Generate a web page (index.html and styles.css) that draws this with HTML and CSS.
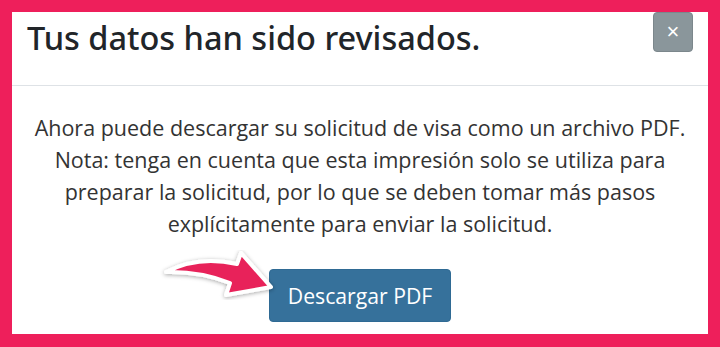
FILE: index.html
```html
<!DOCTYPE html>
<html>
<head>
  <meta charset="UTF-8">
  <title>Datos revisados</title>
  <link rel="stylesheet" href="styles.css">
</head>
<body>
  <div class="modal">
    <div class="modal-header">
      <h1>Tus datos han sido revisados.</h1>
      <button class="close-button" aria-label="Cerrar">&times;</button>
    </div>
    <div class="modal-body">
      <p>Ahora puede descargar su solicitud de visa como un archivo PDF.<br>
      Nota: tenga en cuenta que esta impresión solo se utiliza para<br>
      preparar la solicitud, por lo que se deben tomar más pasos<br>
      explícitamente para enviar la solicitud.</p>
      <div class="actions">
        <svg class="arrow" width="120" height="50" viewBox="160 250 120 50">
          <defs>
            <filter id="shadow" x="-20%" y="-40%" width="140%" height="180%">
              <feDropShadow dx="0" dy="1" stdDeviation="2" flood-color="#000" flood-opacity="0.35"/>
            </filter>
          </defs>
          <path d="M166 272 Q198 255 237 264 L241 253 L271 287 L226 295 L230 283 Q200 271 166 272 Z"
                fill="#e8245a" stroke="#fff" stroke-width="4" stroke-linejoin="round" filter="url(#shadow)"/>
        </svg>
        <button class="download-button">Descargar PDF</button>
      </div>
    </div>
  </div>
</body>
</html>
```

FILE: styles.css
```css
body {
  margin: 0;
  padding: 12px 12px 13px 12px;
  background-color: #ee1f5b;
  font-family: 'Open Sans', 'Noto Sans', sans-serif;
  color: #212529;
}

.modal {
  background: #fff;
  height: 322px;
  position: relative;
}

.modal-header {
  display: flex;
  justify-content: space-between;
  align-items: flex-start;
  height: 73px;
  padding-left: 15px;
  padding-right: 15px;
  border-bottom: 1px solid #dee2e6;
}

.modal-header h1 {
  margin: 6px 0 0 0;
  font-family: 'Noto Sans', 'Open Sans', sans-serif;
  font-size: 32.5px;
  font-weight: 500;
  line-height: 40px;
}

.close-button {
  width: 40px;
  height: 40px;
  margin-top: 0;
  background: #8a969b;
  color: #fff;
  border: 1px solid #7c878c;
  border-radius: 4px;
  font-size: 22px;
  line-height: 1;
  padding: 0;
}

.modal-body {
  text-align: center;
  padding-top: 26px;
}

.modal-body p {
  margin: 0;
  font-size: 21.5px;
  line-height: 32px;
  color: #333;
}

.actions {
  position: relative;
  margin-top: 29px;
}

.download-button {
  background: #36719b;
  color: #fff;
  border: 1px solid #2f6a94;
  border-radius: 4px;
  font-family: inherit;
  font-size: 21.2px;
  padding: 0 18px;
  height: 53px;
}

.arrow {
  position: absolute;
  left: 148px;
  top: -19px;
}
```
